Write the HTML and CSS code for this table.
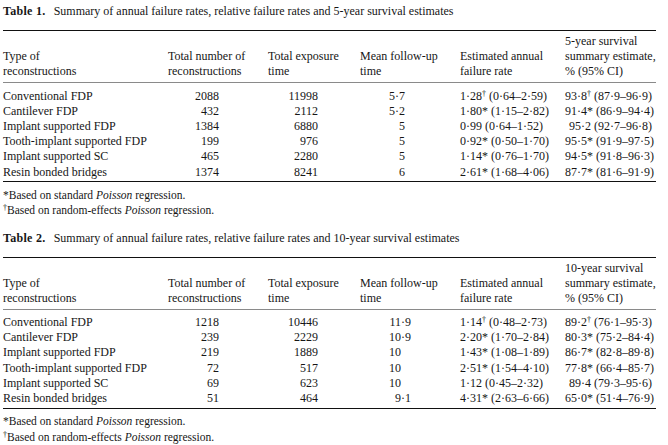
FILE: index.html
```html
<!DOCTYPE html>
<html lang="en">
<head>
<meta charset="utf-8">
<title>Annual failure rates tables</title>
<link rel="stylesheet" href="styles.css">
</head>
<body>
<section class="tbl">
  <p class="caption"><b class="label">Table 1.</b>Summary of annual failure rates, relative failure rates and 5-year survival estimates</p>
  <table>
    <colgroup><col class="w1"><col class="w2"><col class="w3"><col class="w4"><col class="w5"><col class="w6"></colgroup>
    <thead>
      <tr>
        <th>Type of<br>reconstructions</th>
        <th>Total number of<br>reconstructions</th>
        <th>Total exposure<br>time</th>
        <th>Mean follow-up<br>time</th>
        <th>Estimated annual<br>failure rate</th>
        <th>5-year survival<br>summary estimate,<br>% (95% CI)</th>
      </tr>
    </thead>
    <tbody>
      <tr><td class="name">Conventional FDP</td><td class="c2">2088</td><td class="c3">11998</td><td class="c4">5·7</td><td class="c5">1·28<sup>†</sup> (0·64–2·59)</td><td class="c6">93·8<sup>†</sup> (87·9–96·9)</td></tr>
      <tr><td class="name">Cantilever FDP</td><td class="c2">432</td><td class="c3">2112</td><td class="c4">5·2</td><td class="c5">1·80* (1·15–2·82)</td><td class="c6">91·4* (86·9–94·4)</td></tr>
      <tr><td class="name">Implant supported FDP</td><td class="c2">1384</td><td class="c3">6880</td><td class="c4">5</td><td class="c5">0·99 (0·64–1·52)</td><td class="c6">95·2 (92·7–96·8)</td></tr>
      <tr><td class="name">Tooth-implant supported FDP</td><td class="c2">199</td><td class="c3">976</td><td class="c4">5</td><td class="c5">0·92* (0·50–1·70)</td><td class="c6">95·5* (91·9–97·5)</td></tr>
      <tr><td class="name">Implant supported SC</td><td class="c2">465</td><td class="c3">2280</td><td class="c4">5</td><td class="c5">1·14* (0·76–1·70)</td><td class="c6">94·5* (91·8–96·3)</td></tr>
      <tr><td class="name">Resin bonded bridges</td><td class="c2">1374</td><td class="c3">8241</td><td class="c4">6</td><td class="c5">2·61* (1·68–4·06)</td><td class="c6">87·7* (81·6–91·9)</td></tr>
    </tbody>
  </table>
  <div class="notes">
    <p class="note">*Based on standard <i>Poisson</i> regression.</p>
    <p class="note"><sup>†</sup>Based on random-effects <i>Poisson</i> regression.</p>
  </div>
</section>

<section class="tbl">
  <p class="caption"><b class="label">Table 2.</b>Summary of annual failure rates, relative failure rates and 10-year survival estimates</p>
  <table class="t2">
    <colgroup><col class="w1"><col class="w2"><col class="w3"><col class="w4"><col class="w5"><col class="w6"></colgroup>
    <thead>
      <tr>
        <th>Type of<br>reconstructions</th>
        <th>Total number of<br>reconstructions</th>
        <th>Total exposure<br>time</th>
        <th>Mean follow-up<br>time</th>
        <th>Estimated annual<br>failure rate</th>
        <th>10-year survival<br>summary estimate,<br>% (95% CI)</th>
      </tr>
    </thead>
    <tbody>
      <tr><td class="name">Conventional FDP</td><td class="c2">1218</td><td class="c3">10446</td><td class="c4">11·9</td><td class="c5">1·14<sup>†</sup> (0·48–2·73)</td><td class="c6">89·2<sup>†</sup> (76·1–95·3)</td></tr>
      <tr><td class="name">Cantilever FDP</td><td class="c2">239</td><td class="c3">2229</td><td class="c4">10·9</td><td class="c5">2·20* (1·70–2·84)</td><td class="c6">80·3* (75·2–84·4)</td></tr>
      <tr><td class="name">Implant supported FDP</td><td class="c2">219</td><td class="c3">1889</td><td class="c4">10<span class="pad">·0</span></td><td class="c5">1·43* (1·08–1·89)</td><td class="c6">86·7* (82·8–89·8)</td></tr>
      <tr><td class="name">Tooth-implant supported FDP</td><td class="c2">72</td><td class="c3">517</td><td class="c4">10<span class="pad">·0</span></td><td class="c5">2·51* (1·54–4·10)</td><td class="c6">77·8* (66·4–85·7)</td></tr>
      <tr><td class="name">Implant supported SC</td><td class="c2">69</td><td class="c3">623</td><td class="c4">10<span class="pad">·0</span></td><td class="c5">1·12 (0·45–2·32)</td><td class="c6">89·4 (79·3–95·6)</td></tr>
      <tr><td class="name">Resin bonded bridges</td><td class="c2">51</td><td class="c3">464</td><td class="c4">9·1</td><td class="c5">4·31* (2·63–6·66)</td><td class="c6">65·0* (51·4–76·9)</td></tr>
    </tbody>
  </table>
  <div class="notes">
    <p class="note">*Based on standard <i>Poisson</i> regression.</p>
    <p class="note"><sup>†</sup>Based on random-effects <i>Poisson</i> regression.</p>
  </div>
</section>
</body>
</html>
```
FILE: styles.css
```css
html, body {
  background: #ffffff;
}
body {
  margin: 0;
  padding: 0 0 0 3px;
  font-family: "Liberation Serif", "Times New Roman", serif;
  font-size: 12px;
  color: #161616;
}
.tbl + .tbl {
  margin-top: 8px;
}
.caption {
  margin: 0;
  padding-top: 4px;
  line-height: 15px;
}
.caption .label {
  margin-right: 8px;
  letter-spacing: 0.3px;
}
table {
  width: 653px;
  table-layout: fixed;
  border-collapse: collapse;
  border-top: 1px solid #111111;
  border-bottom: 1px solid #111111;
  margin-top: 11px;
}
.w1 { width: 165px; }
.w2 { width: 100px; }
.w3 { width: 92px; }
.w4 { width: 100px; }
.w5 { width: 105px; }
.w6 { width: 91px; }
th {
  font-weight: normal;
  text-align: left;
  vertical-align: bottom;
  line-height: 15px;
  padding: 3px 0 3px 0;
  border-bottom: 1px solid #8a8a8a;
  white-space: nowrap;
}
td {
  padding: 0;
  line-height: 15.2px;
  text-align: right;
  white-space: nowrap;
}
tbody tr:first-child td {
  padding-top: 5.5px;
}
tbody tr:last-child td {
  padding-bottom: 1.5px;
}
td.name { text-align: left; }
td.c2 { padding-right: 49px; }
td.c3 { padding-right: 42px; }
td.c4 { padding-right: 55px; }
.t2 td.c4 { padding-right: 49px; }
td.c5 { padding-right: 24px; }
td.c6 { padding-right: 4px; }
.pad { visibility: hidden; }
sup {
  font-size: 8px;
  line-height: 0;
  vertical-align: 4px;
}
.notes {
  padding-top: 5.7px;
}
.note {
  margin: 0;
  font-size: 11.5px;
  line-height: 15.3px;
}
```
